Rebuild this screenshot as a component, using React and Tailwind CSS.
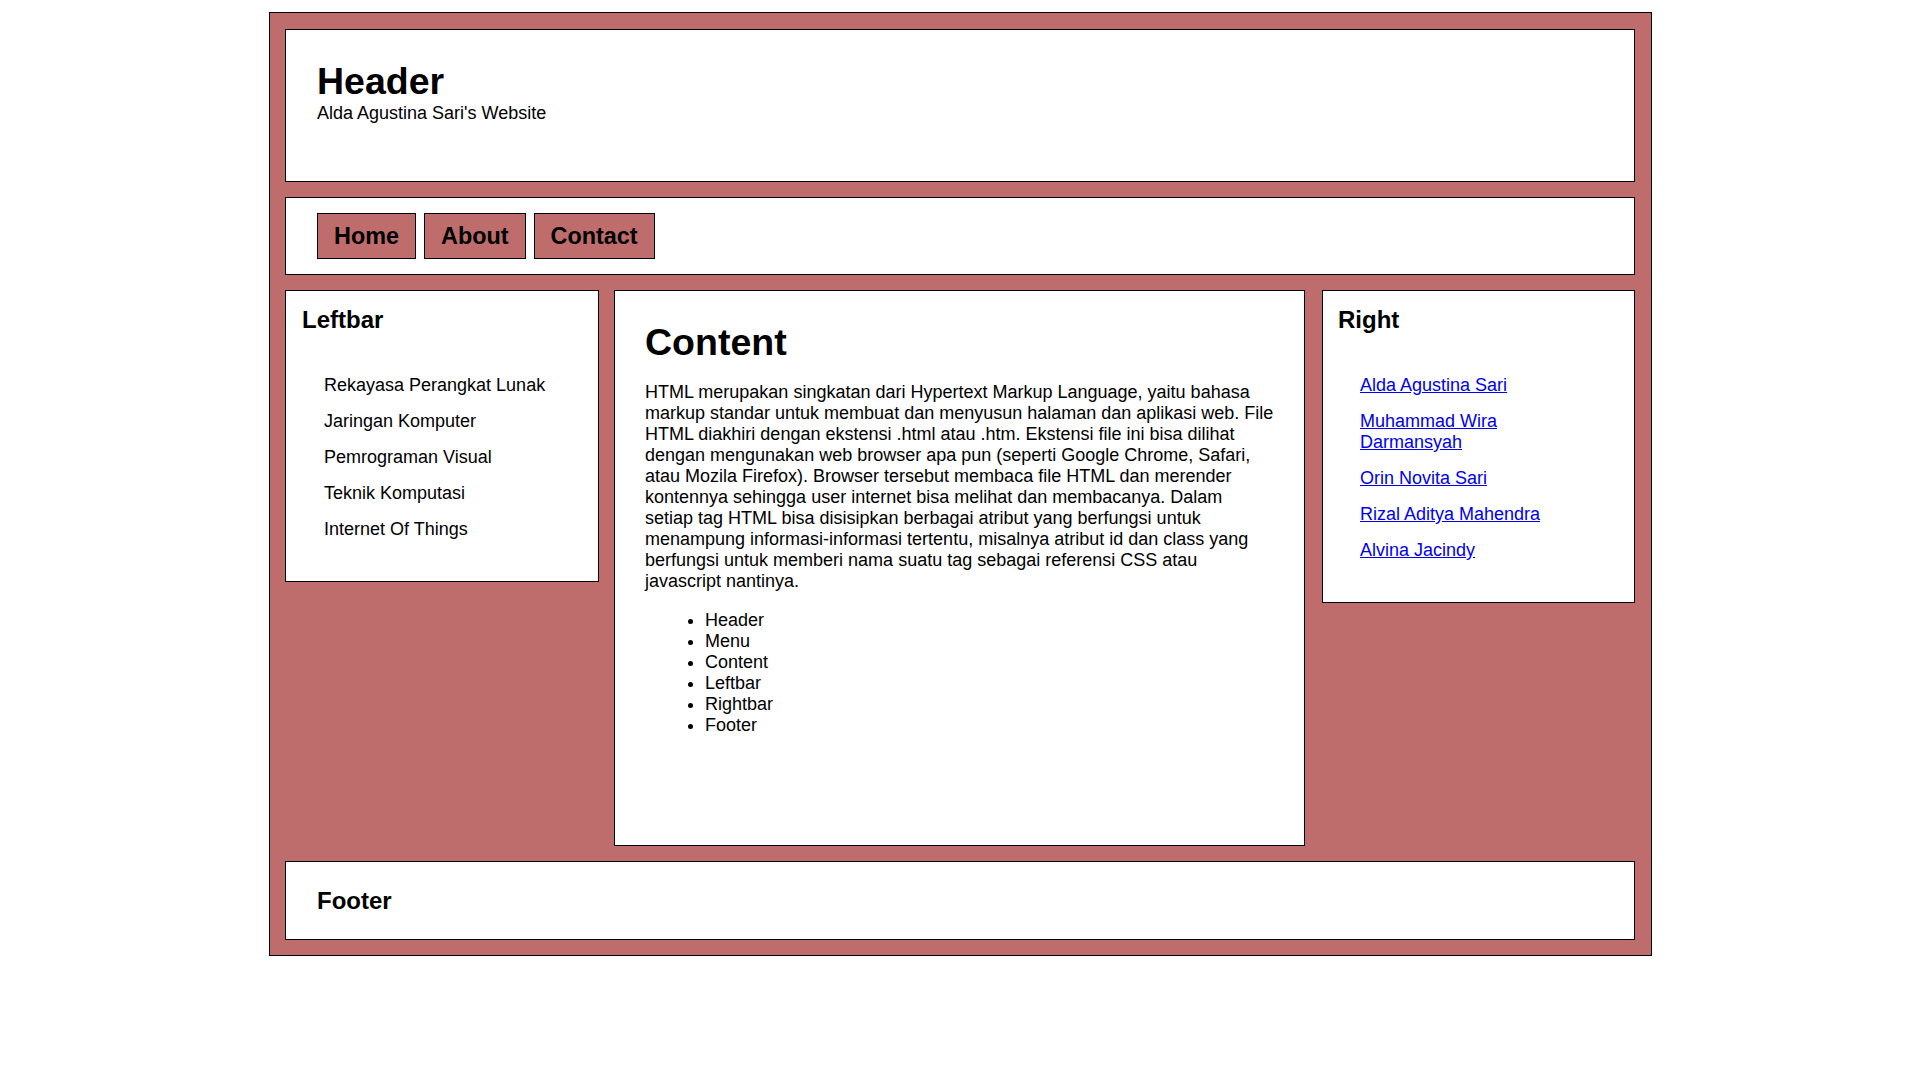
const MENU = ['Home', 'About', 'Contact'];

const COURSES = [
  'Rekayasa Perangkat Lunak',
  'Jaringan Komputer',
  'Pemrograman Visual',
  'Teknik Komputasi',
  'Internet Of Things',
];

const FRIENDS = [
  'Alda Agustina Sari',
  'Muhammad Wira Darmansyah',
  'Orin Novita Sari',
  'Rizal Aditya Mahendra',
  'Alvina Jacindy',
];

const SECTIONS = ['Header', 'Menu', 'Content', 'Leftbar', 'Rightbar', 'Footer'];

export default function App() {
  return (
    <div className="min-h-screen bg-white pt-[12px] font-['Liberation_Sans',Arial,sans-serif] text-black">
      <div className="ml-[269px] w-[1383px] border border-black bg-[#be6c6c] pt-[16px] pl-[15px] pr-[16px] pb-[15px] flex flex-col gap-[15px]">
        {/* header */}
        <header className="h-[153px] border border-black bg-white pl-[31px] pt-[30px]">
          <h1 className="text-[37.5px] font-bold leading-[42px]">Header</h1>
          <p className="mt-[1px] text-[18px] leading-[21px]">Alda Agustina Sari's Website</p>
        </header>

        {/* menu */}
        <nav className="h-[78px] border border-black bg-white pl-[31px] flex items-center gap-[8px]">
          {MENU.map((item) => (
            <a
              key={item}
              href="#"
              className="h-[46px] px-[16px] border border-black bg-[#be6c6c] flex items-center text-[23.4px] font-bold leading-[27px]"
            >
              {item}
            </a>
          ))}
        </nav>

        {/* columns */}
        <div className="flex items-start">
          <aside className="w-[314px] shrink-0 border border-black bg-white pl-[16px] pr-[15px] pt-[15px] pb-[41px]">
            <h2 className="text-[24px] font-bold leading-[27px]">Leftbar</h2>
            <ul className="mt-[42px] pl-[22px] flex flex-col gap-[15px] text-[18px] leading-[21px]">
              {COURSES.map((c) => (
                <li key={c}>{c}</li>
              ))}
            </ul>
          </aside>

          <main className="ml-[15px] w-[691px] h-[556px] shrink-0 border border-black bg-white pl-[30px] pr-[30px] pt-[30px]">
            <h1 className="text-[37.5px] font-bold leading-[42px]">Content</h1>
            <p className="mt-[19px] text-[18px] leading-[21px]">
              HTML merupakan singkatan dari Hypertext Markup Language, yaitu bahasa markup standar untuk membuat dan
              menyusun halaman dan aplikasi web. File HTML diakhiri dengan ekstensi .html atau .htm. Ekstensi file ini
              bisa dilihat dengan mengunakan web browser apa pun (seperti Google Chrome, Safari, atau Mozila Firefox).
              Browser tersebut membaca file HTML dan merender kontennya sehingga user internet bisa melihat dan
              membacanya. Dalam setiap tag HTML bisa disisipkan berbagai atribut yang berfungsi untuk menampung
              informasi-informasi tertentu, misalnya atribut id dan class yang berfungsi untuk memberi nama suatu tag
              sebagai referensi CSS atau javascript nantinya.
            </p>
            <ul className="mt-[18px] pl-[60px] list-disc text-[18px] leading-[21px]">
              {SECTIONS.map((s) => (
                <li key={s}>{s}</li>
              ))}
            </ul>
          </main>

          <aside className="ml-[17px] w-[313px] shrink-0 border border-black bg-white pl-[15px] pr-[15px] pt-[15px] pb-[41px]">
            <h2 className="text-[24px] font-bold leading-[27px]">Right</h2>
            <ul className="mt-[42px] pl-[22px] pr-[40px] flex flex-col gap-[15px] text-[18px] leading-[21px]">
              {FRIENDS.map((f) => (
                <li key={f}>
                  <a href="#" className="text-[#0000ee] underline">
                    {f}
                  </a>
                </li>
              ))}
            </ul>
          </aside>
        </div>

        {/* footer */}
        <footer className="h-[79px] border border-black bg-white pl-[31px] pb-[1px] flex items-center">
          <h2 className="text-[24px] font-bold leading-[27px]">Footer</h2>
        </footer>
      </div>
    </div>
  );
}
